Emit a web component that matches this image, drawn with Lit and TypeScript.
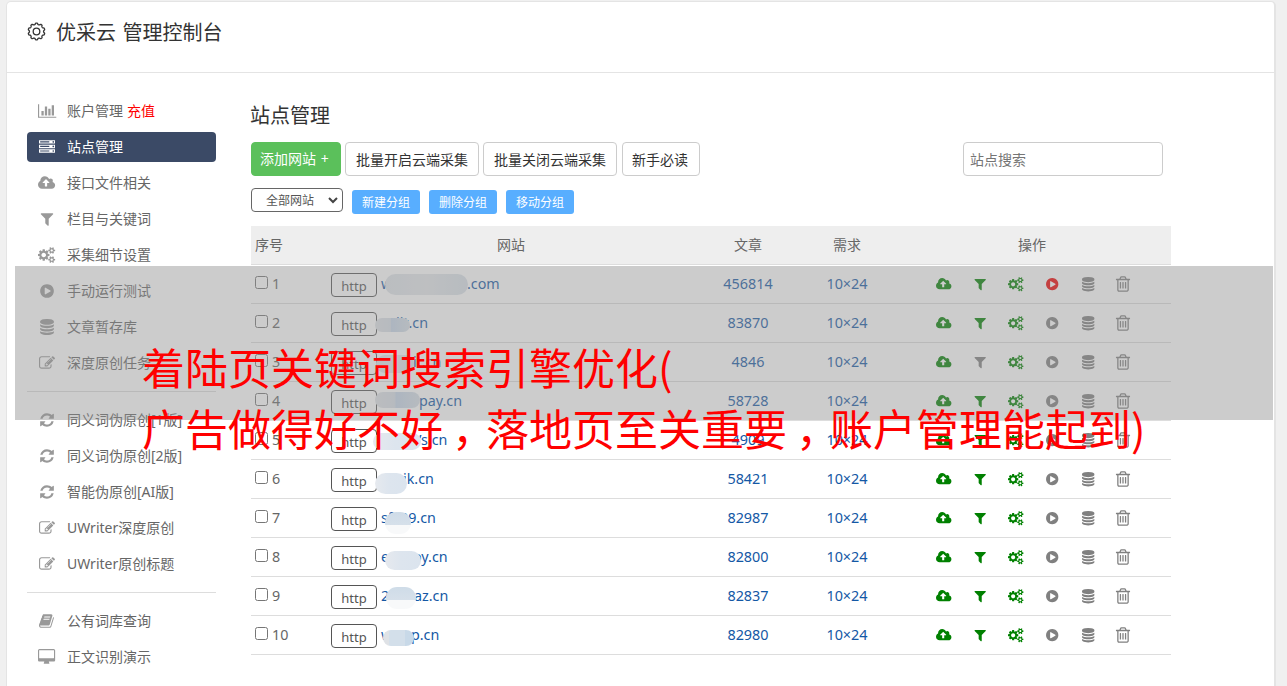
import { LitElement, html, css, svg } from "lit";
import { customElement, property } from "lit/decorators.js";

const ICONS: Record<string, [number, string]> = {
  chart: [2048, "M640 896v512h-256v-512h256zm384-512v1024h-256v-1024h256zm1024 1152v128h-2048v-1536h128v1408h1920zm-640-896v768h-256v-768h256zm384-384v1152h-256v-1152h256z"],
  server: [1792, "M128 1408h1024v-128h-1024v128zm0-512h1024v-128h-1024v128zm1568 448q0-40-28-68t-68-28-68 28-28 68 28 68 68 28 68-28 28-68zm-1568-960h1024v-128h-1024v128zm1568 448q0-40-28-68t-68-28-68 28-28 68 28 68 68 28 68-28 28-68zm0-512q0-40-28-68t-68-28-68 28-28 68 28 68 68 28 68-28 28-68zm96 832v384h-1792v-384h1792zm0-512v384h-1792v-384h1792zm0-512v384h-1792v-384h1792z"],
  cloud: [1920, "M1280 864q0-14-9-23l-352-352q-9-9-23-9t-23 9l-351 351q-10 12-10 24 0 14 9 23t23 9h224v352q0 13 9.5 22.5t22.5 9.5h192q13 0 22.5-9.5t9.5-22.5v-352h224q13 0 22.5-9.5t9.5-22.5zm640 288q0 159-112.5 271.5t-271.5 112.5h-1088q-185 0-316.5-131.5t-131.5-316.5q0-130 70-240t188-165q-2-30-2-43 0-212 150-362t362-150q156 0 285.5 87t188.5 231q71-62 166-62 106 0 181 75t75 181q0 76-41 138 130 31 213.5 135.5t83.5 238.5z"],
  filter: [1792, "M1595 295q17 41-14 70l-493 493v742q0 42-39 59-13 5-25 5-27 0-45-19l-256-256q-19-19-19-45v-486l-493-493q-31-29-14-70 17-39 59-39h1280q42 0 59 39z"],
  cogs: [1920, "M896 896q0-106-75-181t-181-75-181 75-75 181 75 181 181 75 181-75 75-181zm768 512q0-52-38-90t-90-38-90 38-38 90q0 53 37.5 90.5t90.5 37.5 90.5-37.5 37.5-90.5zm0-1024q0-52-38-90t-90-38-90 38-38 90q0 53 37.5 90.5t90.5 37.5 90.5-37.5 37.5-90.5zm-384 421v185q0 10-7 19.5t-16 10.5l-155 24q-11 35-32 76 34 48 90 115 7 11 7 20 0 12-7 19-23 30-82.5 89.5t-78.5 59.5q-11 0-21-7l-115-90q-37 19-77 31-11 108-23 155-7 24-30 24h-186q-11 0-20-7.5t-10-17.5l-23-153q-34-10-75-31l-118 89q-7 7-20 7-11 0-21-8-144-133-144-160 0-9 7-19 10-14 41-53t47-61q-23-44-35-82l-152-24q-10-1-17-9.5t-7-19.5v-185q0-10 7-19.5t16-10.5l155-24q11-35 32-76-34-48-90-115-7-11-7-20 0-12 7-20 22-30 82-89t79-59q11 0 21 7l115 90q34-18 77-32 11-108 23-154 7-24 30-24h186q11 0 20 7.5t10 17.5l23 153q34 10 75 31l118-89q8-7 20-7 11 0 21 8 144 133 144 160 0 8-7 19-12 16-42 54t-45 60q23 48 34 82l152 23q10 2 17 10.5t7 19.5zm640 533v140q0 16-149 31-12 27-30 52 51 113 51 138 0 4-4 7-122 71-124 71-8 0-46-47t-52-68q-20 2-30 2t-30-2q-14 21-52 68t-46 47q-2 0-124-71-4-3-4-7 0-25 51-138-18-25-30-52-149-15-149-31v-140q0-16 149-31 13-29 30-52-51-113-51-138 0-4 4-7 4-2 35-20t59-34 30-16q8 0 46 46.5t52 67.5q20-2 30-2t30 2q51-71 92-112l6-2q4 0 124 70 4 3 4 7 0 25-51 138 17 23 30 52 149 15 149 31zm0-1024v140q0 16-149 31-12 27-30 52 51 113 51 138 0 4-4 7-122 71-124 71-8 0-46-47t-52-68q-20 2-30 2t-30-2q-14 21-52 68t-46 47q-2 0-124-71-4-3-4-7 0-25 51-138-18-25-30-52-149-15-149-31v-140q0-16 149-31 13-29 30-52-51-113-51-138 0-4 4-7 4-2 35-20t59-34 30-16q8 0 46 46.5t52 67.5q20-2 30-2t30 2q51-71 92-112l6-2q4 0 124 70 4 3 4 7 0 25-51 138 17 23 30 52 149 15 149 31z"],
  play: [1792, "M896 128q209 0 385.5 103t279.5 279.5 103 385.5-103 385.5-279.5 279.5-385.5 103-385.5-103-279.5-279.5-103-385.5 103-385.5 279.5-279.5 385.5-103zm384 823q32-18 32-55t-32-55l-544-320q-31-19-64-1-32 19-32 56v640q0 37 32 56 16 8 32 8 17 0 32-9z"],
  database: [1792, "M896 768q237 0 443-43t325-127v170q0 69-103 128t-280 93.5-385 34.5-385-34.5-280-93.5-103-128v-170q119 84 325 127t443 43zm0 768q237 0 443-43t325-127v170q0 69-103 128t-280 93.5-385 34.5-385-34.5-280-93.5-103-128v-170q119 84 325 127t443 43zm0-384q237 0 443-43t325-127v170q0 69-103 128t-280 93.5-385 34.5-385-34.5-280-93.5-103-128v-170q119 84 325 127t443 43zm0-1152q208 0 385 34.5t280 93.5 103 128v128q0 69-103 128t-280 93.5-385 34.5-385-34.5-280-93.5-103-128v-128q0-69 103-128t280-93.5 385-34.5z"],
  trash: [1792, "M704 736v576q0 14-9 23t-23 9h-64q-14 0-23-9t-9-23v-576q0-14 9-23t23-9h64q14 0 23 9t9 23zm256 0v576q0 14-9 23t-23 9h-64q-14 0-23-9t-9-23v-576q0-14 9-23t23-9h64q14 0 23 9t9 23zm256 0v576q0 14-9 23t-23 9h-64q-14 0-23-9t-9-23v-576q0-14 9-23t23-9h64q14 0 23 9t9 23zm128 724v-948h-896v948q0 22 7 40.5t14.5 27 10.5 8.5h832q3 0 10.5-8.5t14.5-27 7-40.5zm-672-1076h448l-48-117q-7-9-17-11h-317q-10 2-17 11zm928 32v64q0 14-9 23t-23 9h-96v948q0 83-47 143.5t-113 60.5h-832q-66 0-113-58.5t-47-141.5v-952h-96q-14 0-23-9t-9-23v-64q0-14 9-23t23-9h309l70-167q15-37 54-63t79-26h320q40 0 79 26t54 63l70 167h309q14 0 23 9t9 23z"],
  edit: [1792, "M888 1184l116-116-152-152-116 116v56h96v96h56zm440-720q-16-16-33 1l-350 350q-17 17-1 33t33-1l350-350q17-17 1-33zm80 594v190q0 119-84.5 203.5t-203.5 84.5h-832q-119 0-203.5-84.5t-84.5-203.5v-832q0-119 84.5-203.5t203.5-84.5h832q63 0 117 25 15 7 18 23 3 17-9 29l-49 49q-14 14-32 8-23-6-45-6h-832q-66 0-113 47t-47 113v832q0 66 47 113t113 47h832q66 0 113-47t47-113v-126q0-13 9-22l64-64q15-15 35-7t20 29zm-96-738l288 288-672 672h-288v-288zm444 132l-92 92-288-288 92-92q28-28 68-28t68 28l152 152q28 28 28 68t-28 68z"],
  refresh: [1792, "M1639 1056q0 5-1 7-64 268-268 434.5t-478 166.5q-146 0-282.5-55t-243.5-157l-129 129q-19 19-45 19t-45-19-19-45v-448q0-26 19-45t45-19h448q26 0 45 19t19 45-19 45l-137 137q71 66 161 102t187 36q134 0 250-65t186-179q11-17 53-117 8-23 30-23h192q13 0 22.5 9.5t9.5 22.5zm25-800v448q0 26-19 45t-45 19h-448q-26 0-45-19t-19-45 19-45l138-138q-148-137-349-137-134 0-250 65t-186 179q-11 17-53 117-8 23-30 23h-199q-13 0-22.5-9.5t-9.5-22.5v-7q65-268 270-434.5t480-166.5q146 0 284 55.5t245 156.5l130-129q19-19 45-19t45 19 19 45z"],
  book: [1792, "M1639 478q40 57 18 129l-275 906q-19 64-76.5 107.5t-122.5 43.5h-923q-77 0-148.5-53.5t-99.5-131.5q-24-67-2-127 0-4 3-27t4-37q1-8-3-21.5t-3-19.5q2-11 8-21t16.5-23.5 16.5-23.5q23-38 45-91.5t30-91.5q3-10 .5-30t-.5-28q3-11 17-28t17-23q21-36 42-92t25-90q1-9-2.5-32t.5-28q4-13 22-30.5t22-22.5q19-26 42.5-84.5t27.5-96.5q1-8-3-25.5t-2-26.5q2-8 9-18t18-23 17-21q8-12 16.5-30.5t15-35 16-36 19.5-32 26.5-23.5 36-11.5 47.5 5.5l-1 3q38-9 51-9h761q74 0 114 56t18 130l-274 906q-36 119-71.5 153.5t-128.5 34.5h-869q-27 0-38 15-11 16-1 43 24 70 144 70h923q29 0 56-15.5t35-41.5l300-987q7-22 5-57 38 15 59 43zm-1064 2q-4 13 2 22.5t20 9.5h608q13 0 25.5-9.5t16.5-22.5l21-64q4-13-2-22.5t-20-9.5h-608q-13 0-25.5 9.5t-16.5 22.5zm-83 256q-4 13 2 22.5t20 9.5h608q13 0 25.5-9.5t16.5-22.5l21-64q4-13-2-22.5t-20-9.5h-608q-13 0-25.5 9.5t-16.5 22.5z"],
  desktop: [1920, "M1792 992v-832q0-13-9.5-22.5t-22.5-9.5h-1600q-13 0-22.5 9.5t-9.5 22.5v832q0 13 9.5 22.5t22.5 9.5h1600q13 0 22.5-9.5t9.5-22.5zm128-832v1088q0 66-47 113t-113 47h-544q0 37 16 77.5t32 71 16 43.5q0 26-19 45t-45 19h-512q-26 0-45-19t-19-45q0-14 16-44t32-70 16-78h-544q-66 0-113-47t-47-113v-1088q0-66 47-113t113-47h1600q66 0 113 47t47 113z"],
};

@customElement("fa-icon")
class FaIcon extends LitElement {
  @property() name = "";
  @property({ type: Number }) size = 16;
  static styles = css`
    :host { display: inline-flex; }
    svg { display: block; fill: currentColor; overflow: visible; }
  `;
  render() {
    const [w, d] = ICONS[this.name];
    return html`<svg width=${(this.size * w) / 1792} height=${this.size} viewBox="0 0 ${w} 1792">${svg`<path fill-rule="evenodd" d=${d}></path>`}</svg>`;
  }
}

const gearPath = () => {
  const pts: string[] = [];
  for (let i = 0; i <= 120; i++) {
    const a = (i / 120) * Math.PI * 2;
    const r = 7.75 + 0.7 * Math.tanh(2 * Math.cos(10 * a));
    pts.push(`${(9.5 + r * Math.sin(a)).toFixed(2)} ${(9.5 - r * Math.cos(a)).toFixed(2)}`);
  }
  return "M" + pts.join("L") + "Z";
};

type Item = { icon: string; text: string; extra?: string; active?: boolean };
const MENU: Item[][] = [
  [
    { icon: "chart", text: "账户管理", extra: "充值" },
    { icon: "server", text: "站点管理", active: true },
    { icon: "cloud", text: "接口文件相关" },
    { icon: "filter", text: "栏目与关键词" },
    { icon: "cogs", text: "采集细节设置" },
    { icon: "play", text: "手动运行测试" },
    { icon: "database", text: "文章暂存库" },
    { icon: "edit", text: "深度原创任务" },
  ],
  [
    { icon: "refresh", text: "同义词伪原创[1版]" },
    { icon: "refresh", text: "同义词伪原创[2版]" },
    { icon: "refresh", text: "智能伪原创[AI版]" },
    { icon: "edit", text: "UWriter深度原创" },
    { icon: "edit", text: "UWriter原创标题" },
  ],
  [
    { icon: "book", text: "公有词库查询" },
    { icon: "desktop", text: "正文识别演示" },
  ],
];

/* head: visible start of the domain, tail: visible end, tailX: where the tail starts,
   mask: [x, y, width, height] of the smudge, tone: its fill */
type Row = { head: string; tail: string; tailX: number; mask: number[]; tone: string; count: string };
const ROWS: Row[] = [
  { head: "w", tail: ".com", tailX: 86, mask: [4, 9, 83, 21], tone: "a", count: "456814" },
  { head: "", tail: "ijt.cn", tailX: 15, mask: [-6, 14, 35, 14], tone: "b", count: "83870" },
  { head: "", tail: "it.cn", tailX: 32, mask: [-5, 12, 38, 18], tone: "a", count: "4846" },
  { head: "", tail: "pay.cn", tailX: 38, mask: [-6, 10, 45, 16], tone: "b", count: "58728" },
  { head: "", tail: "’s.cn", tailX: 38, mask: [-8, 12, 48, 17], tone: "c", count: "4909" },
  { head: "", tail: "jk.cn", tailX: 22, mask: [-6, 13, 32, 21], tone: "c", count: "58421" },
  { head: "sft", tail: "39.cn", tailX: 19, mask: [4, 13, 26, 22], tone: "d", count: "82987" },
  { head: "e", tail: "oy.cn", tailX: 32, mask: [4, 13, 36, 19], tone: "c", count: "82800" },
  { head: "2", tail: "az.cn", tailX: 33, mask: [5, 10, 30, 22], tone: "d", count: "82837" },
  { head: "w", tail: "p.cn", tailX: 30, mask: [2, 14, 31, 16], tone: "e", count: "82980" },
];

@customElement("app-root")
class AppRoot extends LitElement {
  static styles = css`
    :host {
      display: block; height: 686px; overflow: hidden; position: relative; background: #f0f0f0;
      font: 14px/20px "Noto Sans", "Noto Sans CJK SC", sans-serif; color: #666;
    }
    * { box-sizing: border-box; }
    .page { height: 686px; margin: 1px 11px 0 6px; background: #fff; border: solid #e4e4e4; border-width: 1px 2px 0 1px; border-radius: 5px 5px 0 0; }
    header { height: 71px; border-bottom: 1px solid #e4e4e4; padding: 16px 0 0 20px; display: flex; align-items: flex-start; gap: 10px; }
    header svg { margin-top: 4px; fill: none; stroke: #333; stroke-width: 1.3; }
    h1, h2 { margin: 0; font-weight: 400; font-size: 20px; line-height: 30px; color: #333; font-family: "Noto Sans CJK SC", sans-serif; }
    h1 { word-spacing: 2px; margin-top: -1px; }
    h2 { margin: -1px 0 12px -1px; }
    .body { display: flex; }
    nav { width: 189px; margin: 23px 0 0 20px; flex: none; }
    .item { height: 30px; margin-bottom: 6px; display: flex; align-items: center; border-radius: 4px; white-space: nowrap; }
    .item .ico { width: 40px; display: flex; justify-content: center; color: #999; }
    .item.active { background: #3b4a66; color: #fff; }
    .item.active .ico { color: #fff; }
    .extra { color: #f00; margin-left: 4px; }
    .rule { height: 1px; background: #ddd; margin: 13px 0 13px; }
    main { width: 920px; margin-left: 35px; padding-top: 28px; }
    .tools { display: flex; gap: 4px; height: 34px; padding-right: 8px; }
    .btn { border: 1px solid #ccc; border-radius: 4px; padding: 0 10px; line-height: 33px; color: #333; white-space: nowrap; }
    .btn.add { background: #5bc05b; border-color: #5bc05b; color: #fff; padding: 0 8px; line-height: 32px; width: 90px; word-spacing: 1px; }
    .btn.last { margin-left: 1px; padding: 0 9px; width: 78px; }
    .search { margin-left: auto; width: 200px; border: 1px solid #ccc; border-radius: 4px; padding: 0 6px; line-height: 34px; color: #757575; }
    .groups { display: flex; gap: 9px; margin-top: 12px; height: 26px; font-size: 12px; }
    .select { width: 92px; height: 24px; border: 1px solid #666; border-radius: 4px; padding-left: 14px; line-height: 23px; display: flex; gap: 14px; align-items: center; color: #555; }
    .select svg { fill: none; stroke: #444; stroke-width: 2; }
    .small { background: #58aeff; color: #fff; border-radius: 3px; width: 68px; height: 24px; margin-top: 2px; text-align: center; line-height: 26px; }
    .row { display: grid; grid-template-columns: 80px 360px 114px 84px 282px; height: 39px; border-bottom: 1px solid #ddd; align-items: center; }
    .row.head { background: #eee; margin-top: 12px; line-height: 38px; text-align: center; }
    .row.head > :first-child { text-align: left; padding-left: 4px; }
    .row.head > :last-child { padding-left: 4px; }
    .idx { padding-left: 4px; display: flex; gap: 4px; font-size: 14.3px; }
    .box { width: 13px; height: 13px; border: 1px solid #767676; border-radius: 2.5px; margin-top: 2px; background: #fff; }
    .site { display: flex; height: 38px; }
    .http { width: 46px; height: 24px; border: 1px solid #555; border-radius: 4px; margin: 8px 4px 0 0; text-align: center; line-height: 24px; color: #555; font-size: 13px; background: #fff; }
    .domain { position: relative; width: 140px; line-height: 37px; color: #1458a5; white-space: nowrap; font-size: 14.3px; }
    .tail { position: absolute; left: 0; top: 0; }
    .mask { position: absolute; border-radius: 11px; }
    .a { background: linear-gradient(90deg, #dfe4ea, #e5e8ec 50%, #d9e1e9); }
    .b { background: linear-gradient(90deg, #e0e3e8, #d8dfe8 45%, #c6d6e9 46%, #d8e0e8); }
    .c { background: linear-gradient(90deg, #e6e9ee, #dde5ee 45%, #dbe4ee); }
    .d { background: linear-gradient(180deg, #cfdce8, #d6e0ea 58%, #f8f9fa 59%); }
    .e { background: linear-gradient(90deg, #dfe2e6 20%, #d3dfea 21%, #d3dfea 70%, #c8d9e8 71%); }
    .num { text-align: center; color: #1458a5; font-size: 14.4px; }
    .ops { display: flex; padding-left: 37px; }
    .ops span { width: 36px; display: flex; justify-content: center; align-items: center; color: #808080; }
    .ops .g { color: #008000; }
    .ops .r { color: #f00000; }
    .ops .t { width: 34px; }
    .shade { position: absolute; left: 15px; top: 266px; width: 1258px; height: 154px; background: rgba(142, 142, 142, 0.45); }
    .banner { position: absolute; left: 142px; top: 336px; color: #f00; font: 43px/60.5px "Noto Sans CJK SC", sans-serif; white-space: nowrap; }
    .comma { display: inline-block; transform: translateX(9px); }
  `;

  render() {
    const op = (name: string, cls: string, size = 14.4) => html`<span class=${cls}><fa-icon name=${name} size=${size}></fa-icon></span>`;
    return html`
      <div class="page">
        <header>
          <svg width="19" height="19" viewBox="0 0 19 19"><path d=${gearPath()}></path><circle cx="9.5" cy="9.5" r="3.3"></circle></svg>
          <h1>优采云 管理控制台</h1>
        </header>
        <div class="body">
          <nav>
            ${MENU.map((g, i) => html`
              ${i ? html`<div class="rule"></div>` : ""}
              ${g.map((m) => html`<div class="item ${m.active ? "active" : ""}">
                <span class="ico"><fa-icon name=${m.icon} size="16"></fa-icon></span><span>${m.text}</span>${m.extra ? html`<span class="extra">${m.extra}</span>` : ""}
              </div>`)}`)}
          </nav>
          <main>
            <h2>站点管理</h2>
            <div class="tools">
              <div class="btn add">添加网站 +</div>
              <div class="btn">批量开启云端采集</div>
              <div class="btn">批量关闭云端采集</div>
              <div class="btn last">新手必读</div>
              <div class="search">站点搜索</div>
            </div>
            <div class="groups">
              <div class="select">全部网站<svg width="10" height="7" viewBox="0 0 10 7"><path d="M1 1l4 4 4-4"></path></svg></div>
              <div class="small">新建分组</div><div class="small">删除分组</div><div class="small">移动分组</div>
            </div>
            <div class="row head"><span>序号</span><span>网站</span><span>文章</span><span>需求</span><span>操作</span></div>
            ${ROWS.map((r, i) => html`<div class="row">
              <div class="idx"><span class="box"></span>${i + 1}</div>
              <div class="site">
                <div class="http">http</div>
                <div class="domain">${r.head}<span class="tail" style="left:${r.tailX}px">${r.tail}</span><span class="mask ${r.tone}" style="left:${r.mask[0]}px;top:${r.mask[1]}px;width:${r.mask[2]}px;height:${r.mask[3]}px"></span></div>
              </div>
              <div class="num">${r.count}</div>
              <div class="num">10×24</div>
              <div class="ops">
                ${op("cloud", "g")}${op("filter", i === 2 ? "" : "g")}${op("cogs", "g")}${op("play", i === 0 ? "r" : "")}${op("database", "")}${op("trash", "t", 18)}
              </div>
            </div>`)}
          </main>
        </div>
      </div>
      <div class="shade"></div>
      <div class="banner">着陆页关键词搜索引擎优化(<br />广告做得好不好<span class="comma">，</span>落地页至关重要<span class="comma">，</span>账户管理能起到)</div>
    `;
  }
}
